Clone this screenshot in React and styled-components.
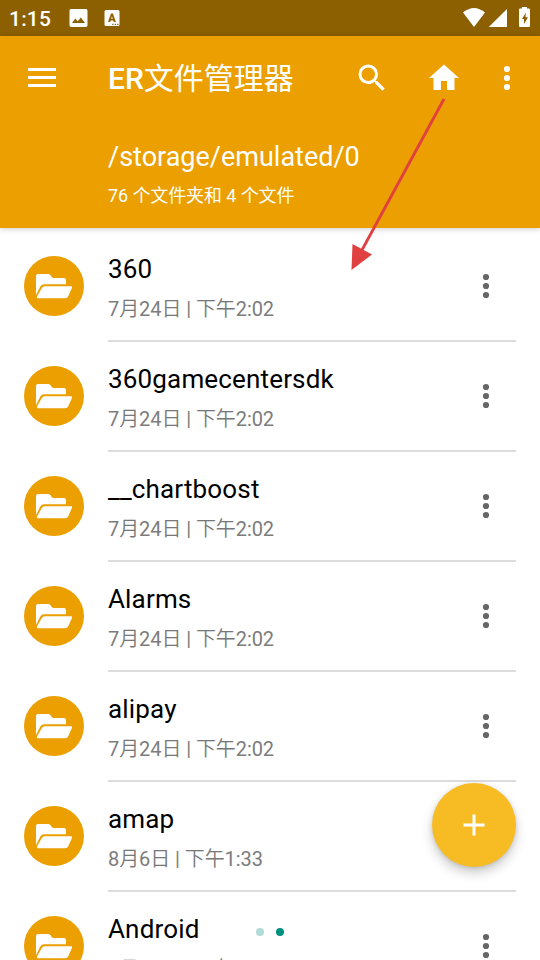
import React from 'react';
import styled, { createGlobalStyle } from 'styled-components';

const GlobalStyle = createGlobalStyle`
  * { box-sizing: border-box; }
  body { margin: 0; background: #fff; overflow: hidden; }
`;

const Screen = styled.main`
  position: relative;
  width: 540px;
  height: 960px;
  overflow: hidden;
  display: flex;
  flex-direction: column;
  background: #fff;
  color: #000;
  font-family: Roboto, 'Noto Sans CJK SC', sans-serif;
`;

const StatusBar = styled.div`
  flex: none;
  display: flex;
  align-items: center;
  height: 36px;
  padding: 0 8px 0 9px;
  background: #8c5f00;
  color: #fff;
`;

const Clock = styled.span`
  width: 60px;
  font-size: 21px;
  line-height: 36px;
  font-weight: 500;
  letter-spacing: 0.2px;
  padding-top: 2px;
`;

const StatusGroup = styled.div`
  display: flex;
  align-items: center;
  gap: ${(p) => p.$gap}px;
  margin-left: ${(p) => (p.$end ? 'auto' : '0')};
`;

const Icon = styled.svg`
  display: block;
  flex: none;
  fill: currentColor;
  width: ${(p) => p.$w}px;
  height: ${(p) => p.$h || p.$w}px;
`;

const Header = styled.header`
  position: relative;
  z-index: 1;
  flex: none;
  height: 192px;
  background: #eb9f00;
  color: #fff;
  box-shadow: 0 1px 6px rgba(0, 0, 0, 0.2);
`;

const Toolbar = styled.div`
  display: flex;
  align-items: center;
  height: 84px;
  padding: 0 6px 0 24px;
`;

const Title = styled.h1`
  margin: 1px 0 0 48px;
  flex: 1;
  font-size: 30px;
  line-height: 40px;
  font-weight: 500;
  white-space: nowrap;
`;

const TitleCjk = styled.span`
  font-weight: 400;
`;

const Actions = styled.div`
  display: flex;
  align-items: center;
`;

const IconButton = styled.button`
  display: flex;
  justify-content: center;
  align-items: center;
  flex: none;
  width: ${(p) => p.$w || 36}px;
  height: 48px;
  padding: 0;
  border: 0;
  background: none;
  color: inherit;
`;

const Location = styled.div`
  padding: 20px 0 0 108px;
`;

const Path = styled.div`
  font-size: 27px;
  line-height: 34px;
`;

const Summary = styled.div`
  margin-top: 9px;
  font-size: 18px;
  line-height: 26px;
  letter-spacing: -0.1px;
`;

const List = styled.ul`
  margin: 0;
  padding: 4px 0 0;
  list-style: none;
`;

const Row = styled.li`
  display: flex;
  height: 110px;
  padding: 0 24px;
`;

const Avatar = styled.div`
  flex: none;
  width: 60px;
  height: 60px;
  margin: 24px 24px 0 0;
  border-radius: 50%;
  background: #eb9f00;
  color: #fff;
`;

const RowBody = styled.div`
  flex: 1;
  display: flex;
  justify-content: space-between;
  border-bottom: 2px solid #dcdcdc;
`;

const Name = styled.div`
  padding-top: 20px;
  font-size: 26px;
  line-height: 34px;
  letter-spacing: 0.16px;
`;

const Meta = styled.div`
  margin-top: 9px;
  font-size: 20px;
  line-height: 28px;
  font-weight: 350;
  letter-spacing: -0.08px;
  color: #777;
`;

const MetaLatin = styled.span`
  font-weight: 400;
  color: #7c7c7c;
`;

const RowMenu = styled(IconButton)`
  margin-top: 30px;
  width: 60px;
  color: #666;
`;

const Fab = styled.button`
  position: absolute;
  right: 24px;
  bottom: 93px;
  z-index: 2;
  display: flex;
  justify-content: center;
  align-items: center;
  width: 84px;
  height: 84px;
  padding: 0;
  border: 0;
  border-radius: 50%;
  background: #f7bc24;
  color: #fff;
  box-shadow: 0 6px 12px rgba(0, 0, 0, 0.2), 0 1px 4px rgba(0, 0, 0, 0.12);
`;

const Pager = styled.div`
  position: absolute;
  left: 256px;
  bottom: 24px;
  display: flex;
  gap: 12px;
`;

const Dot = styled.span`
  width: 8px;
  height: 8px;
  border-radius: 50%;
  background: ${(p) => (p.$active ? '#009080' : '#b0dcd8')};
`;

const Pointer = styled.svg`
  position: absolute;
  left: 340px;
  top: 90px;
  z-index: 3;
  pointer-events: none;
`;

const files = [
  ['360', [7, 24], '2:02'],
  ['360gamecentersdk', [7, 24], '2:02'],
  ['__chartboost', [7, 24], '2:02'],
  ['Alarms', [7, 24], '2:02'],
  ['alipay', [7, 24], '2:02'],
  ['amap', [8, 6], '1:33'],
  ['Android', [7, 24], '2:02'],
];

const MoreIcon = () => (
  <Icon $w={8} $h={26} viewBox="0 0 8 26">
    <circle cx="4" cy="4" r="3.1" />
    <circle cx="4" cy="13" r="3.1" />
    <circle cx="4" cy="22" r="3.1" />
  </Icon>
);

const FolderIcon = () => (
  <Icon $w={60} viewBox="0 0 60 60">
    <path d="M12 39V20Q12 18 14 18H24.3Q26 18 26.8 19.5L27.2 20.3Q28 22 29.5 22H40Q42 22 42 24V28.2H20.2Q17.6 28.2 16.3 30.5Z" />
    <path d="M21 30.2H47Q48.6 30.2 48 31.7L44.4 40Q43.4 42.2 41 42.2H14Q12.3 42.2 13 40.5L17.5 32.4Q18.7 30.2 21 30.2Z" />
  </Icon>
);

function FileRow({ name, date, time }) {
  return (
    <Row>
      <Avatar><FolderIcon /></Avatar>
      <RowBody>
        <div>
          <Name>{name}</Name>
          <Meta>
            <MetaLatin>{date[0]}</MetaLatin>月<MetaLatin>{date[1]}</MetaLatin>日
            <MetaLatin> | </MetaLatin>下午<MetaLatin>{time}</MetaLatin>
          </Meta>
        </div>
        <RowMenu aria-label="更多"><MoreIcon /></RowMenu>
      </RowBody>
    </Row>
  );
}

export default function App() {
  return (
    <Screen>
      <GlobalStyle />
      <StatusBar>
        <Clock>1:15</Clock>
        <StatusGroup $gap={16}>
          <Icon $w={19} $h={18} viewBox="0 0 19 18">
            <path fillRule="evenodd" d="M2 0H17Q18.5 0 18.5 2V16Q18.5 18 17 18H2Q.5 18 .5 16V2Q.5 0 2 0ZM3 14H16L11.8 8.5 8.8 12.3 6.3 9.5Z" />
          </Icon>
          <Icon $w={16} viewBox="0 0 16 16">
            <path fillRule="evenodd" d="M2 0H14Q15.5 0 15.5 1.5V14.5Q15.5 16 14 16H2Q.5 16 .5 14.5V1.5Q.5 0 2 0ZM7 3.4L4 12H6.1L6.6 10.4H9.3L9.8 12H11.9L8.9 3.4ZM7.1 8.8H8.8L7.95 6ZM8.3 13.8V15H9.6V13.8ZM10.8 13.8V15H12.1V13.8ZM13.2 13.8V15H14.4V13.8Z" />
          </Icon>
        </StatusGroup>
        <StatusGroup $end $gap={0}>
          <Icon $w={69} $h={36} viewBox="0 0 69 36">
            <path d="M0 12.5Q11 3.5 22 12.5L11 27Z" />
            <path d="M44 9V27H25.8Z" />
            <path fillRule="evenodd" d="M59 7H64V8.5H66Q67 8.5 67 9.5V26Q67 27 66 27H57Q56 27 56 26V9.5Q56 8.5 57 8.5H59ZM63 12.5L59 19H61V24L65 17.2H62.4Z" />
          </Icon>
        </StatusGroup>
      </StatusBar>

      <Header>
        <Toolbar>
          <IconButton aria-label="菜单">
            <Icon $w={28} $h={20} viewBox="0 0 28 20">
              <path d="M0 0H28V3H0ZM0 8H28V11H0ZM0 16H28V19H0Z" />
            </Icon>
          </IconButton>
          <Title>ER<TitleCjk>文件管理器</TitleCjk></Title>
          <Actions>
            <IconButton $w={72} aria-label="搜索">
              <Icon $w={36} viewBox="0 0 24 24">
                <path d="M15.5 14h-.79l-.28-.27A6.47 6.47 0 0 0 16 9.5 6.5 6.5 0 1 0 9.5 16c1.61 0 3.09-.59 4.23-1.57l.27.28v.79l5 4.99L20.49 19zm-6 0a4.5 4.5 0 1 1 0-9 4.5 4.5 0 0 1 0 9z" />
              </Icon>
            </IconButton>
            <IconButton $w={72} aria-label="主页">
              <Icon $w={36} viewBox="0 0 24 24">
                <path d="M10 20v-6h4v6h5v-8h3L12 3 2 12h3v8z" />
              </Icon>
            </IconButton>
            <IconButton $w={54} aria-label="更多"><MoreIcon /></IconButton>
          </Actions>
        </Toolbar>
        <Location>
          <Path>/storage/emulated/0</Path>
          <Summary>76 个文件夹和 4 个文件</Summary>
        </Location>
      </Header>

      <List>
        {files.map(([name, date, time]) => (
          <FileRow key={name} name={name} date={date} time={time} />
        ))}
      </List>

      <Fab aria-label="新建">
        <Icon $w={22} viewBox="0 0 22 22">
          <path d="M9.5 .5H12.5V9.5H21.5V12.5H12.5V21.5H9.5V12.5H.5V9.5H9.5Z" />
        </Icon>
      </Fab>
      <Pager><Dot /><Dot $active /></Pager>
      <Pointer width="120" height="190" viewBox="0 0 120 190">
        <path d="M104 9L22 160" stroke="#e04040" strokeWidth="2.8" fill="none" />
        <path d="M11.5 180L12.5 154L32 164.5Z" fill="#e04040" />
      </Pointer>
    </Screen>
  );
}
